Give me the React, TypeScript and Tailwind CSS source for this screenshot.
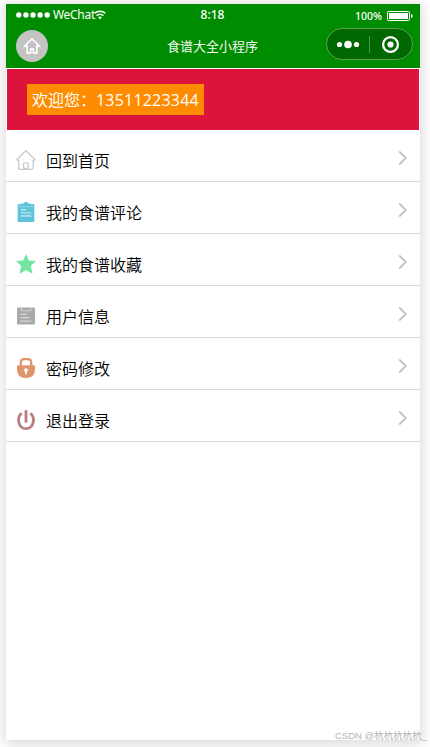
import type { ReactNode } from "react";

const cjk = "font-['Noto_Sans','Noto_Sans_CJK_SC',sans-serif]";

function StatusBar() {
  return (
    <div className="flex h-[22px] items-center justify-between pr-[7px] pl-[10px] text-xs leading-none">
      <div className="flex w-[120px] items-center">
        <svg width="34" height="6" viewBox="0 0 34 6" fill="white" className="mr-[3px]">
          <circle cx="2.8" cy="3" r="2.7" />
          <circle cx="9.9" cy="3" r="2.7" />
          <circle cx="17" cy="3" r="2.7" />
          <circle cx="24.1" cy="3" r="2.7" />
          <circle cx="31.2" cy="3" r="2.7" />
        </svg>
        <span className="w-[41px] text-xs tracking-[-0.3px] whitespace-nowrap">WeChat</span>
        <svg width="12" height="10" viewBox="0 0 12 10" fill="none" stroke="white" strokeWidth="1.5">
          <path d="M.6 3.2C3.6.6 8.4.6 11.4 3.2" />
          <path d="M2.6 5.6c2-1.7 4.8-1.7 6.8 0" />
          <path d="M4.2 7.2c1-.8 2.6-.8 3.6 0L6 9.4z" fill="white" stroke="none" />
        </svg>
      </div>
      <span className="mr-1 font-medium">8:18</span>
      <div className="flex w-[120px] items-center justify-end pt-[2px]">
        <span className="mr-[5px] text-[10.5px] leading-none font-medium">100%</span>
        <svg width="26" height="10" viewBox="0 0 26 10" fill="none">
          <rect x=".5" y=".5" width="22" height="9" rx="1.2" stroke="white" />
          <rect x="2" y="2" width="19" height="6" fill="white" />
          <path d="M24 3c2.2.5 2.2 3.5 0 4z" fill="white" />
        </svg>
      </div>
    </div>
  );
}

function NavBar() {
  return (
    <div className="flex h-[42px] items-start justify-between pr-[7px] pl-[10px]">
      <div className="flex w-[88px] pt-[4px]">
        <div className="flex size-8 items-center justify-center rounded-full bg-[#c3c3c3]">
          <svg width="18" height="18" viewBox="0 0 18 18" fill="none" stroke="white" strokeWidth="1.6">
            <path d="M9 1.8 1.7 9.1h2.5v7h3.4v-4h2.8v4h3.4v-7h2.5z" />
          </svg>
        </div>
      </div>
      <span className="mr-[5px] pt-[10px] text-[13px] leading-5 text-[#f2f9f2]">食谱大全小程序</span>
      <div className="mt-[2px] flex h-8 w-[87px] items-center rounded-full border border-[#55a055] bg-[#006800]">
        <svg width="85" height="30" viewBox="0 0 85 30" fill="white">
          <circle cx="12.5" cy="15.5" r="2.6" />
          <circle cx="21" cy="15.5" r="3.8" />
          <circle cx="29.5" cy="15.5" r="2.6" />
          <path d="M42.5 7v17" stroke="#4d954d" />
          <circle cx="63.5" cy="15.5" r="7.4" fill="none" stroke="white" strokeWidth="2.3" />
          <circle cx="63.5" cy="15.5" r="3.1" />
        </svg>
      </div>
    </div>
  );
}

function Icon({ children }: { children: ReactNode }) {
  return (
    <svg width="20" height="20" viewBox="0 0 20 20" fill="none">
      {children}
    </svg>
  );
}

const items = [
  {
    label: "回到首页",
    icon: (
      <g stroke="#cbcbcb" strokeWidth="1.3" strokeLinejoin="round" strokeLinecap="round">
        <path d="M.7 9.8 9.9.7l9.3 9.1-2 .5v7.5q0 1.5-1.5 1.5H4.2q-1.5 0-1.5-1.5v-7.5z" />
        <path d="M7.6 18.3v-4.5q0-1 1-1h2.6q1 0 1 1v4.5z" />
      </g>
    ),
  },
  {
    label: "我的食谱评论",
    icon: (
      <>
        <path d="M1.7 2h16.6v18H1.7z" fill="#5bc3da" />
        <path d="M3.8 2v2.7h12.4V2" stroke="#9cdbe8" strokeWidth=".9" />
        <path d="M5 1.4h2.8Q8 0 10 0t2.2 1.4H15v2.4H5z" fill="#5bc3da" />
        <path d="M4.8 7.8h5.5M4.8 10.9h10.5M4.8 14h10.5" stroke="#b8e5ee" strokeWidth="1.4" />
      </>
    ),
  },
  {
    label: "我的食谱收藏",
    icon: <path d="m10 0 2.9 6.6 7.1.4-5.2 5 1.7 7.7L10 15.9l-6.5 3.8L5.2 12 0 7l7.1-.4z" fill="#70e4a0" />,
  },
  {
    label: "用户信息",
    icon: (
      <>
        <rect x="1" y="1.5" width="18" height="17" rx="1.3" fill="#a9a9a9" />
        <path d="M5.2 1.5v2.2q0 1 1 1h7.6q1 0 1-1V1.5" stroke="#d4d4d4" strokeWidth="1.1" />
        <path d="M4.4 8.2h6.5M4.4 11.7h9M4.4 15.1h11" stroke="#d8d8d8" strokeWidth="1.3" />
      </>
    ),
  },
  {
    label: "密码修改",
    icon: (
      <>
        <path d="M4.8 9V4.5q0-3.4 3.4-3.4h3.6q3.4 0 3.4 3.4V9" stroke="#e0946c" strokeWidth="2.3" />
        <path d="M2.2 7.3h15.6q1.2 0 1.2 1.2v3Q19 20 10 20t-9-8.5v-3q0-1.2 1.2-1.2z" fill="#e0946c" />
        <path d="M8.1 12.3a1.9 1.9 0 1 1 2.8 1.6v2.3H9.1v-2.3q-1-.5-1-1.6z" fill="white" />
      </>
    ),
  },
  {
    label: "退出登录",
    icon: (
      <>
        <path d="M5.6 3.2C.4 7.6 2 18.6 10 18.6s9.6-11 4.4-15.4" stroke="#b97f80" strokeWidth="2.8" />
        <path d="M10 1.2v10.3" stroke="#b97f80" strokeWidth="2.8" strokeLinecap="round" />
      </>
    ),
  },
];

export default function App() {
  return (
    <div className={`h-[747px] w-[430px] overflow-hidden bg-white pt-1 pl-[6px] ${cjk}`}>
      <main className="relative h-[736px] w-[414px] bg-white shadow-[0_2px_12px_2px_rgba(0,0,0,0.15)]">
        <header className="h-16 bg-[#008c00] text-white">
          <StatusBar />
          <NavBar />
        </header>
        <section className="mx-px mt-px flex h-[61px] items-start bg-[#dc143c] pt-[15px] pl-5">
          <div className="flex h-[31px] w-[177px] items-center bg-[#ff8c00] pl-[5px] font-['Open_Sans','Noto_Sans_CJK_SC',sans-serif] text-base leading-none whitespace-nowrap text-white">
            <span className="w-16">欢迎您：</span>
            <span className="tracking-[0.2px]">13511223344</span>
          </div>
        </section>
        <ul>
          {items.map(({ label, icon }) => (
            <li key={label} className="flex h-[52px] items-center border-b border-[#d9d9d9] pt-[9px] pr-3 pl-[10px]">
              <Icon>{icon}</Icon>
              <span className="ml-[10px] flex-1 font-['Noto_Sans_CJK_SC',sans-serif] text-base leading-6 font-[350] text-black">{label}</span>
              <svg width="10" height="16" viewBox="0 0 10 16" fill="none" stroke="#c4c4c4" strokeWidth="1.8" className="mb-1">
                <path d="m1.2 1.5 6.6 6.5-6.6 6.5" />
              </svg>
            </li>
          ))}
        </ul>
        <span className="absolute top-[725px] left-[329px] font-['Liberation_Sans','Noto_Sans_CJK_SC',sans-serif] text-[9.5px] leading-[14px] whitespace-nowrap text-[#b5b5b5]">
          CSDN @杭杭杭杭杭_
        </span>
      </main>
    </div>
  );
}
